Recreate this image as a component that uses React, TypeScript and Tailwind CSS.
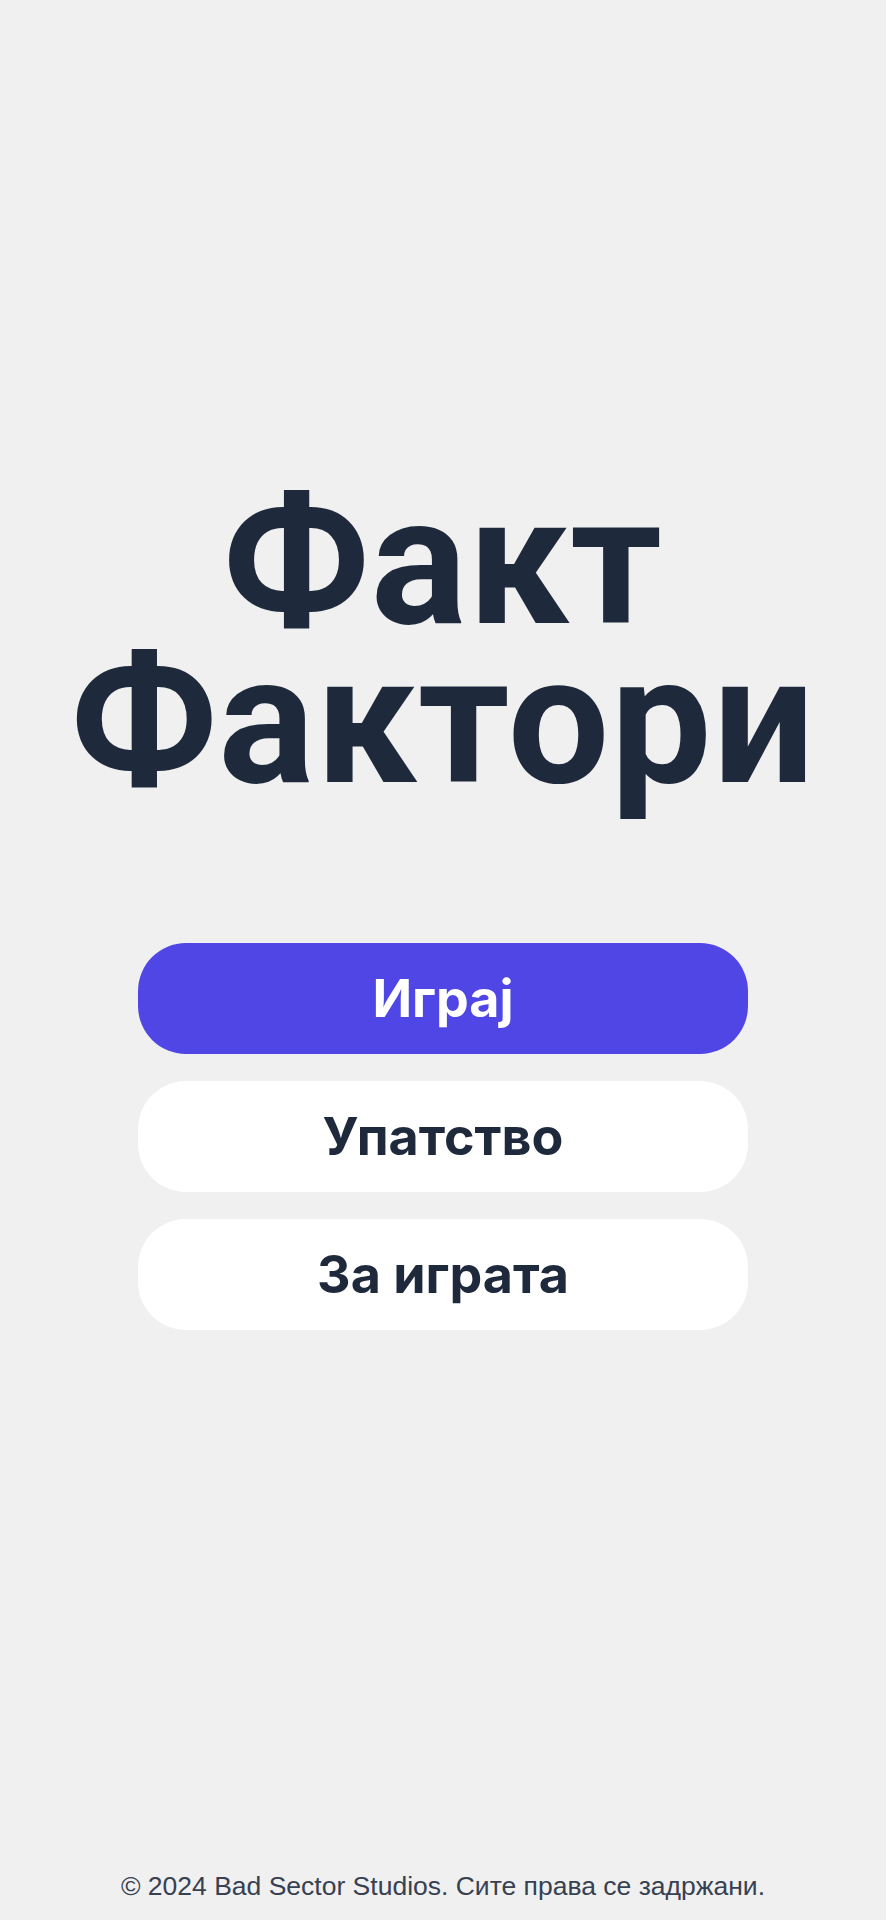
import React from "react";

const menu = [
  { label: "Играј", primary: true },
  { label: "Упатство", primary: false },
  { label: "За играта", primary: false },
];

export default function App() {
  return (
    <div className="min-h-[1920px] w-full bg-[#f0f0f0] flex flex-col items-center">
      {/* title + menu */}
      <main className="flex flex-col items-center pt-[482px]">
        <h1 className="font-['Roboto',sans-serif] font-bold text-[180px] leading-[159px] text-[#1e293b] text-center tracking-[1px]">
          Факт
          <br />
          Фактори
        </h1>

        <div className="flex flex-col gap-[27px] mt-[143px] w-[610px]">
          {menu.map((item) => (
            <button
              key={item.label}
              className={
                item.primary
                  ? "h-[111px] rounded-[48px] bg-[#4f46e5] text-white text-[52px] font-bold font-['Inter',sans-serif]"
                  : "h-[111px] rounded-[48px] bg-white text-[#1e293b] text-[52px] font-bold font-['Inter',sans-serif]"
              }
            >
              {item.label}
            </button>
          ))}
        </div>
      </main>

      <div className="flex-1" />

      {/* footer */}
      <footer className="pb-[18px] text-[26.5px] leading-[32px] text-[#374151] font-['Liberation_Sans',sans-serif]">
        © 2024 Bad Sector Studios. Сите права се задржани.
      </footer>
    </div>
  );
}
